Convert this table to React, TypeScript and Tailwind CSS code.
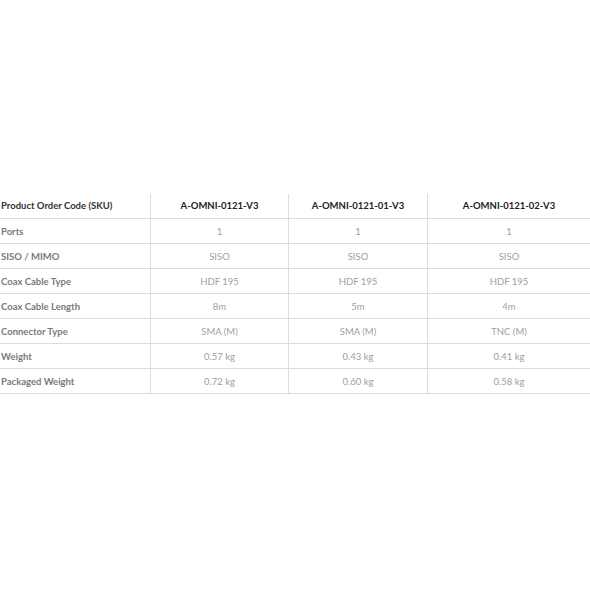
import React from "react";

const cols = ["A-OMNI-0121-V3", "A-OMNI-0121-01-V3", "A-OMNI-0121-02-V3"];
const rows: [string, string[]][] = [
  ["Ports", ["1", "1", "1"]],
  ["SISO / MIMO", ["SISO", "SISO", "SISO"]],
  ["Coax Cable Type", ["HDF 195", "HDF 195", "HDF 195"]],
  ["Coax Cable Length", ["8m", "5m", "4m"]],
  ["Connector Type", ["SMA (M)", "SMA (M)", "TNC (M)"]],
  ["Weight", ["0.57 kg", "0.43 kg", "0.41 kg"]],
  ["Packaged Weight", ["0.72 kg", "0.60 kg", "0.58 kg"]],
];

export default function App() {
  return (
    <div
      className="w-[590px] h-[590px] bg-white pt-[194px] overflow-hidden"
      style={{ fontFamily: "Lato, 'Liberation Sans', sans-serif" }}
    >
      <div className="grid grid-cols-[150px_138px_139px_163px]">
        <div className="h-[25px] pt-[1px] border-b border-[#dcdcdc] flex items-center pl-[1px] text-[9.5px] font-bold text-[#333]">
          Product Order Code (SKU)
        </div>
        {cols.map((c) => (
          <div
            key={c}
            className="h-[25px] pt-[1px] border-b border-l border-[#dcdcdc] flex items-center justify-center text-[9.5px] font-bold text-[#222]"
          >
            {c}
          </div>
        ))}
        {rows.map(([label, vals]) => (
          <React.Fragment key={label}>
            <div className="h-[25px] pt-[2px] border-b border-[#dcdcdc] flex items-center pl-[1px] text-[9.5px] font-bold text-[#7a7a7a]">
              {label}
            </div>
            {vals.map((v, i) => (
              <div
                key={i}
                className="h-[25px] pt-[2px] border-b border-l border-[#dcdcdc] flex items-center justify-center text-[9.5px] text-[#a0a0a0]"
              >
                {v}
              </div>
            ))}
          </React.Fragment>
        ))}
      </div>
    </div>
  );
}
